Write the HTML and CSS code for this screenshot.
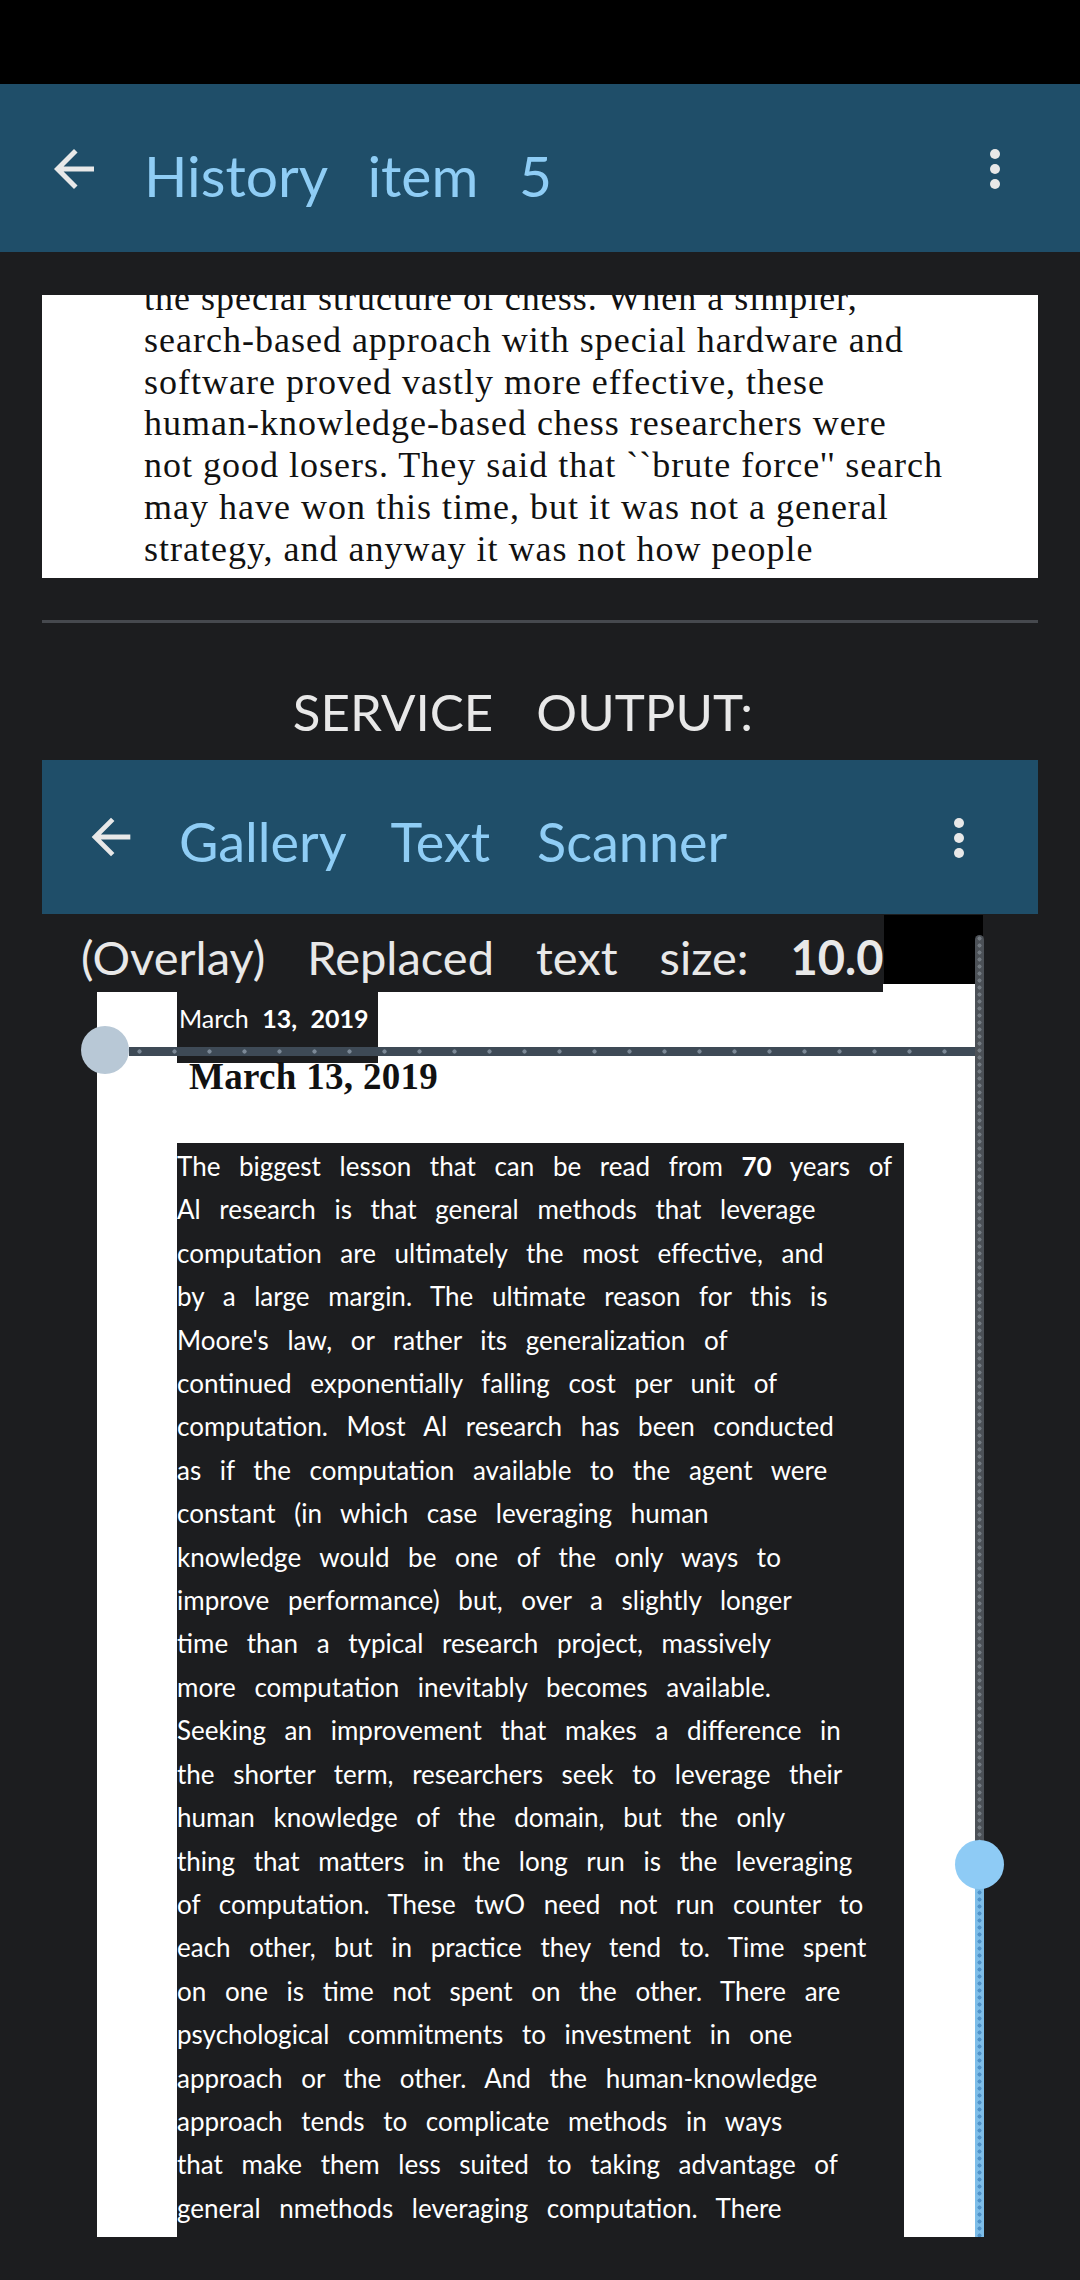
FILE: index.html
```html
<!DOCTYPE html>
<html>
<head>
<meta charset="utf-8">
<link rel="stylesheet" href="styles.css">
</head>
<body>
<div class="statusbar"></div>
<header class="appbar">
  <svg class="back" viewBox="0 0 24 24" width="60" height="60"><path d="M20 11H7.83l5.59-5.59L12 4l-8 8 8 8 1.41-1.41L7.83 13H20v-2z" fill="#e8e8e8"/></svg>
  <div class="title">History item 5</div>
  <svg class="dots" viewBox="0 0 10 40" width="10" height="40"><circle cx="5" cy="5" r="5" fill="#e8e8e8"/><circle cx="5" cy="20" r="5" fill="#e8e8e8"/><circle cx="5" cy="35" r="5" fill="#e8e8e8"/></svg>
</header>
<main class="content">
  <section class="card">
    <div class="card-text">
      <div>the special structure of chess. When a simpler,</div>
      <div>search-based approach with special hardware and</div>
      <div>software proved vastly more effective, these</div>
      <div>human-knowledge-based chess researchers were</div>
      <div>not good losers. They said that ``brute force'' search</div>
      <div>may have won this time, but it was not a general</div>
      <div>strategy, and anyway it was not how people</div>
    </div>
  </section>
  <div class="divider"></div>
  <h2 class="section-title">SERVICE OUTPUT:</h2>
  <header class="appbar2">
    <svg class="back2" viewBox="0 0 24 24" width="58" height="58"><path d="M20 11H7.83l5.59-5.59L12 4l-8 8 8 8 1.41-1.41L7.83 13H20v-2z" fill="#e8e8e8"/></svg>
    <div class="title2">Gallery Text Scanner</div>
    <svg class="dots2" viewBox="0 0 10 40" width="10" height="40"><circle cx="5" cy="5" r="5" fill="#e8e8e8"/><circle cx="5" cy="20" r="5" fill="#e8e8e8"/><circle cx="5" cy="35" r="5" fill="#e8e8e8"/></svg>
  </header>
  <div class="viewer">
    <div class="viewer-row">
      <div class="panel">
        <div class="date-box">March <b>13,</b> <b>2019</b></div>
        <div class="date-serif">March 13, 2019</div>
        <div class="text-box">
          <div>The biggest lesson that can be read from <b>70</b> years of</div>
          <div>Al research is that general methods that leverage</div>
          <div>computation are ultimately the most effective, and</div>
          <div>by a large margin. The ultimate reason for this is</div>
          <div>Moore's law, or rather its generalization of</div>
          <div>continued exponentially falling cost per unit of</div>
          <div>computation. Most Al research has been conducted</div>
          <div>as if the computation available to the agent were</div>
          <div>constant (in which case leveraging human</div>
          <div>knowledge would be one of the only ways to</div>
          <div>improve performance) but, over a slightly longer</div>
          <div>time than a typical research project, massively</div>
          <div>more computation inevitably becomes available.</div>
          <div>Seeking an improvement that makes a difference in</div>
          <div>the shorter term, researchers seek to leverage their</div>
          <div>human knowledge of the domain, but the only</div>
          <div>thing that matters in the long run is the leveraging</div>
          <div>of computation. These twO need not run counter to</div>
          <div>each other, but in practice they tend to. Time spent</div>
          <div>on one is time not spent on the other. There are</div>
          <div>psychological commitments to investment in one</div>
          <div>approach or the other. And the human-knowledge</div>
          <div>approach tends to complicate methods in ways</div>
          <div>that make them less suited to taking advantage of</div>
          <div>general nmethods leveraging computation. There</div>
        </div>
      </div>
      <div class="vtrack">
        <div class="vtrack-top"></div>
        <div class="vtrack-bottom"></div>
        <div class="vthumb"></div>
      </div>
    </div>
    <div class="black-box"></div>
    <div class="overlay-label">(Overlay) Replaced text size: <b>10.0</b></div>
    <div class="hslider">
      <div class="htrack"></div>
      <div class="hthumb"></div>
    </div>
  </div>
</main>
</body>
</html>
```
FILE: styles.css
```css
html, body {
  margin: 0;
  padding: 0;
}
body {
  width: 1080px;
  height: 2280px;
  overflow: hidden;
  background: #1c1d1f;
  font-family: Lato, "Open Sans", sans-serif;
}
.statusbar {
  height: 84px;
  background: #000;
}
.appbar {
  height: 168px;
  background: #1f4e69;
  display: flex;
  align-items: flex-start;
  padding: 0 80px 0 44px;
}
.back {
  margin-top: 55px;
  flex: none;
}
.title {
  margin-top: 62px;
  margin-left: 40px;
  font-size: 57px;
  line-height: 58px;
  color: #8fcdf5;
  word-spacing: 26px;
  white-space: nowrap;
}
.dots {
  margin-left: auto;
  margin-top: 65px;
  flex: none;
}
.content {
  padding: 0 42px;
}
.card {
  margin-top: 43px;
  height: 283px;
  background: #fff;
  overflow: hidden;
}
.card-text {
  margin-top: -17px;
  padding-left: 102px;
  font-family: "Liberation Serif", serif;
  font-size: 36px;
  line-height: 41.8px;
  letter-spacing: 1px;
  word-spacing: 0;
  color: #111;
  white-space: nowrap;
}
.divider {
  margin-top: 42px;
  height: 3px;
  background: #46494e;
}
.section-title {
  margin: 59px 0 0;
  padding-right: 34px;
  text-align: center;
  font-size: 51px;
  line-height: 60px;
  font-weight: 400;
  color: #e8e8e8;
  word-spacing: 30px;
}
.appbar2 {
  margin-top: 18px;
  height: 154px;
  background: #1f4e69;
  display: flex;
  align-items: flex-start;
  padding: 0 74px 0 40px;
}
.back2 {
  margin-top: 48px;
  flex: none;
}
.title2 {
  margin-top: 55px;
  margin-left: 39px;
  font-size: 54px;
  line-height: 54px;
  color: #8fcdf5;
  word-spacing: 33px;
  white-space: nowrap;
}
.dots2 {
  margin-left: auto;
  margin-top: 58px;
  flex: none;
}
.viewer {
  position: relative;
  height: 1366px;
}
.viewer-row {
  display: flex;
  align-items: flex-start;
}
.panel {
  margin-left: 55px;
  margin-top: 70px;
  width: 878px;
  height: 1253px;
  box-sizing: border-box;
  padding: 8px 0 0 80px;
  background: #fff;
  overflow: hidden;
}
.date-box {
  width: 201px;
  height: 71px;
  box-sizing: border-box;
  padding: 11px 0 0 2px;
  background: #1c1d1f;
  color: #fff;
  font-size: 25px;
  line-height: 30px;
  word-spacing: 7px;
  white-space: nowrap;
  overflow: hidden;
}
.date-box b, .text-box b, .overlay-label b {
  font-weight: 700;
}
.date-serif {
  margin: -6px 0 0 12px;
  font-family: "Liberation Serif", serif;
  font-weight: 700;
  font-size: 37px;
  line-height: 40px;
  letter-spacing: 0.3px;
  color: #111;
  white-space: nowrap;
}
.text-box {
  margin-top: 46px;
  width: 727px;
  height: 1200px;
  padding-top: 2px;
  box-sizing: border-box;
  background: #1c1d1f;
  color: #fff;
  font-size: 26px;
  line-height: 43.4px;
  word-spacing: 12px;
  white-space: nowrap;
  overflow: hidden;
}
.vtrack {
  position: relative;
  z-index: 2;
  margin-top: 21px;
  width: 9px;
  height: 1302px;
  display: flex;
  flex-direction: column;
}
.vtrack-top {
  height: 912px;
  border-radius: 5px 5px 0 0;
  background-color: #4c5157;
  background-image: radial-gradient(circle, #737a81 1.8px, transparent 2.3px);
  background-size: 9px 7px;
}
.vtrack-bottom {
  flex: 1;
  background-color: #7dbde8;
  background-image: radial-gradient(circle, #4f92c9 1.8px, transparent 2.3px);
  background-size: 9px 7px;
}
.vthumb {
  position: absolute;
  left: -20px;
  top: 905px;
  width: 49px;
  height: 49px;
  border-radius: 50%;
  background: #8ecbf5;
}
.black-box {
  position: absolute;
  left: 842px;
  top: 1px;
  width: 99px;
  height: 69px;
  background: #000;
}
.overlay-label {
  position: absolute;
  left: 0;
  top: 1px;
  width: 841px;
  height: 77px;
  box-sizing: border-box;
  padding: 7px 0 0 39px;
  background: #1c1d1f;
  color: #e8e8e8;
  font-size: 47px;
  line-height: 70px;
  word-spacing: 30px;
  white-space: nowrap;
  overflow: hidden;
}
.hslider {
  position: absolute;
  left: 39px;
  top: 112px;
  width: 894px;
  height: 48px;
}
.htrack {
  position: absolute;
  left: 48px;
  right: 0;
  top: 21px;
  height: 9px;
  background-color: #3e4a56;
  background-image: radial-gradient(circle, #7b8896 1.8px, transparent 2.4px);
  background-size: 35px 9px;
  background-position: -7px 0;
}
.hthumb {
  position: absolute;
  left: 0;
  top: 0;
  width: 48px;
  height: 48px;
  border-radius: 50%;
  background: #b8c8d6;
}
```
